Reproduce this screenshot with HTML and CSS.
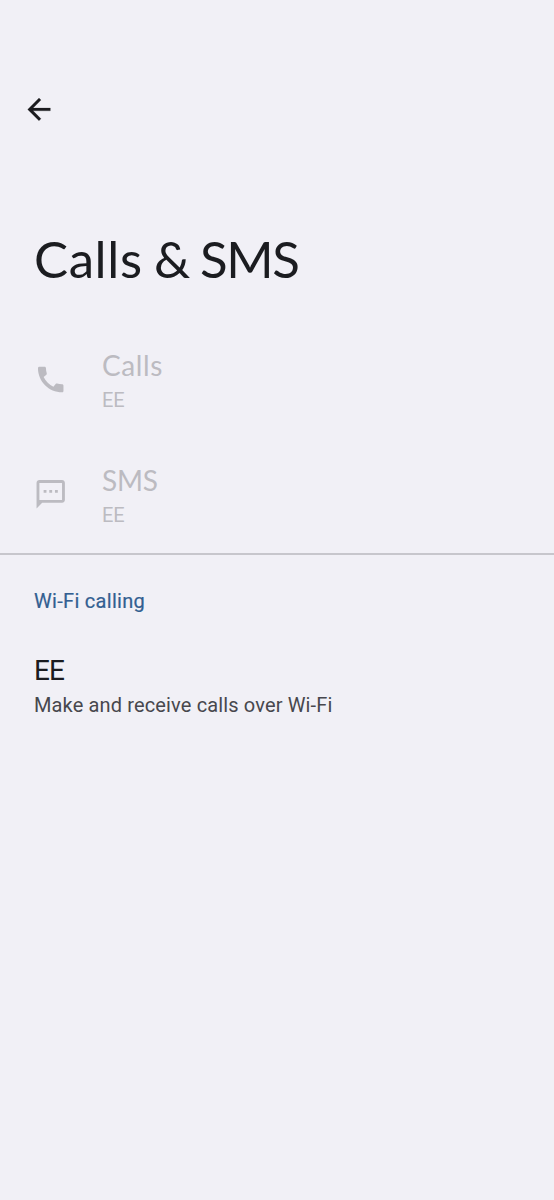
FILE: index.html
```html
<!DOCTYPE html>
<html lang="en">
<head>
<meta charset="utf-8">
<title>Calls &amp; SMS</title>
<link rel="stylesheet" href="styles.css">
</head>
<body>
<header class="toolbar">
  <button class="back" aria-label="Back"><svg class="back-icon" viewBox="0 -.3 24 24"><path d="M20 11H7.83l5.59-5.59L12 4l-8 8 8 8 1.41-1.41L7.83 13H20z"/></svg></button>
</header>
<h1 class="title"><span class="title-first">Calls</span> &amp; <span class="title-last">SMS</span></h1>
<main>
  <section class="group">
    <div class="row">
      <svg class="icon" viewBox="0.2 -.4 24 24"><path d="M20.01 15.38c-1.23 0-2.42-.2-3.53-.56-.35-.12-.74-.03-1.01.24l-1.57 1.97c-2.83-1.35-5.48-3.9-6.89-6.83l1.95-1.66c.27-.28.35-.67.24-1.02-.37-1.11-.56-2.3-.56-3.53 0-.54-.45-.99-.99-.99H4.19C3.65 3 3 3.24 3 3.99 3 13.28 10.73 21 20.01 21c.71 0 .99-.63.99-1.18v-3.45c0-.54-.45-.99-.99-.99z"/></svg>
      <div class="labels"><div class="name calls">Calls</div><div class="sub">EE</div></div>
    </div>
    <div class="row">
      <svg class="icon" viewBox="0.2 -.2 24 24"><path d="M20 2H4c-1.100 0-2 .9-2 2v18l4-4h14c1.100 0 2-.9 2-2V4c0-1.100-.9-2-2-2zm0 14H4V4h16v12zM7 9h2v2H7zm4 0h2v2h-2zm4 0h2v2h-2z"/></svg>
      <div class="labels"><div class="name sms">SMS</div><div class="sub">EE</div></div>
    </div>
  </section>
  <section class="wifi">
    <h2 class="heading">Wi-Fi calling</h2>
    <div class="name carrier">EE</div>
    <div class="sub detail">Make and receive calls over Wi-Fi</div>
  </section>
</main>
</body>
</html>
```
FILE: styles.css
```css
* { box-sizing: border-box; }
body { margin: 0; min-height: 1200px; background: #f1f0f6; color: #1b1c20; font-family: Lato, "Open Sans", sans-serif; }
.toolbar { height: 217px; padding: 92px 0 0 22px; }
.back { display: block; width: 34px; height: 34px; padding: 0; border: 0; background: none; color: #1b1b1f; }
.back-icon { display: block; width: 34px; height: 34px; fill: currentColor; stroke: currentColor; stroke-width: .15; }
.title { margin: 0; height: 121px; padding-left: 34px; font-size: 51px; line-height: 84px; font-weight: 400; white-space: nowrap; letter-spacing: -1.700px; }
.title-first { letter-spacing: .6px; }
.title-last { letter-spacing: -1.300px; }
.group { height: 217px; border-bottom: 2px solid #c7c6cc; }
.row { display: flex; height: 115px; padding: 8px 0 0 34px; color: #bcbbc1; }
.icon { width: 34px; height: 34px; margin: 16px 34px 0 0; fill: currentColor; flex: none; }
.name { height: 38px; font-size: 28px; line-height: 38px; }
.calls { letter-spacing: .6px; }
.sms { letter-spacing: -.2px; }
.sub { height: 30px; font-family: Roboto, sans-serif; font-size: 20px; line-height: 30px; letter-spacing: -.2px; }
.row .sub { margin-top: 1px; }
.wifi { padding: 31px 0 0 34px; }
.heading { height: 66px; margin: 0; font-family: Roboto, sans-serif; font-size: 20px; line-height: 30px; font-weight: 400; letter-spacing: .3px; color: #335f91; -webkit-text-stroke: .2px #335f91; }
.carrier { font-family: Roboto, sans-serif; font-size: 28px; letter-spacing: -.8px; }
.detail { letter-spacing: .14px; color: #47474d; }
```
